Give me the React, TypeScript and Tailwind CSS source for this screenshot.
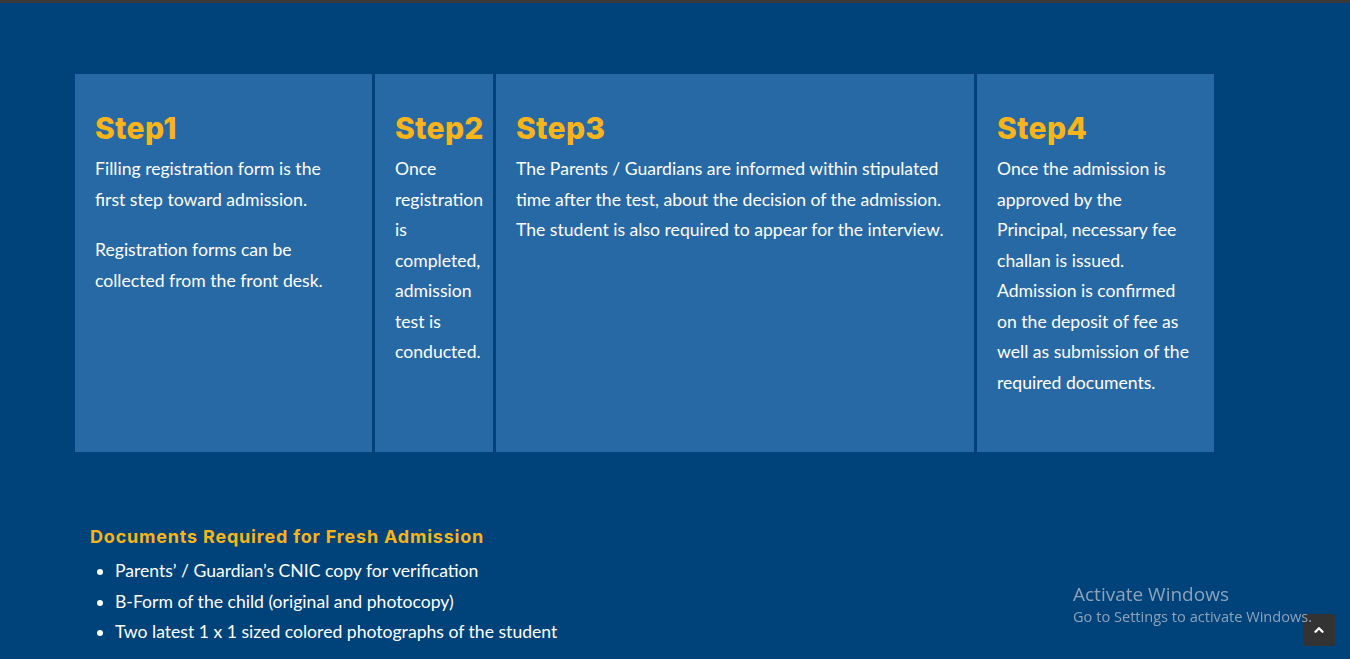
import { ChevronUp } from "lucide-react";

const steps = [
  {
    title: "Step1",
    width: "w-[297px]",
    paras: [
      "Filling registration form is the first step toward admission.",
      "Registration forms can be collected from the front desk.",
    ],
  },
  {
    title: "Step2",
    width: "w-[118px]",
    paras: ["Once registration is completed, admission test is conducted."],
  },
  {
    title: "Step3",
    width: "w-[478px]",
    paras: [
      "The Parents / Guardians are informed within stipulated time after the test, about the decision of the admission. The student is also required to appear for the interview.",
    ],
  },
  {
    title: "Step4",
    width: "w-[237px]",
    paras: [
      "Once the admission is approved by the Principal, necessary fee challan is issued. Admission is confirmed on the deposit of fee as well as submission of the required documents.",
    ],
  },
];

const documents = [
  "Parents’ / Guardian’s CNIC copy for verification",
  "B-Form of the child (original and photocopy)",
  "Two latest 1 x 1 sized colored photographs of the student",
];

export default function App() {
  return (
    <div className="min-h-screen bg-[#00437a] font-['Lato',sans-serif] text-white">
      {/* top strip */}
      <div className="h-[3px] bg-[#3a3a3a]" />

      {/* Steps */}
      <div className="pt-[71px] pl-[75px]">
        <div className="flex h-[378px] w-[1139px] gap-[3px]">
          {steps.map((s) => (
            <div
              key={s.title}
              className={`${s.width} shrink-0 bg-[#2769a5] px-5 pt-[36px]`}
            >
              <h2 className="font-['Inter',sans-serif] text-[30px] font-extrabold leading-[36px] tracking-[0.3px] text-[#f9b41a]">
                {s.title}
              </h2>
              <div className="mt-2">
                {s.paras.map((p, i) => (
                  <p key={i} className="mb-5 text-[17.6px] leading-[30.5px]">
                    {p}
                  </p>
                ))}
              </div>
            </div>
          ))}
        </div>
      </div>

      {/* Documents */}
      <div className="pl-[90px] pt-[73px]">
        <h3 className="font-['Inter',sans-serif] text-[18px] font-bold leading-[24px] tracking-[0.8px] text-[#f9b41a]">
          Documents Required for Fresh Admission
        </h3>
        <ul className="mt-[7px] list-disc pl-[25px] text-[17.6px] leading-[30.5px]">
          {documents.map((d) => (
            <li key={d}>{d}</li>
          ))}
        </ul>
      </div>

      {/* scroll to top */}
      <button className="fixed left-[1303px] top-[614px] z-10 flex h-8 w-8 items-center justify-center rounded-[2px] bg-[#333333]">
        <ChevronUp size={14} strokeWidth={4} color="#ffffff" />
      </button>

      {/* Windows watermark */}
      <div className="pointer-events-none fixed left-[1073px] top-[581px] z-20 font-['Open_Sans',sans-serif] text-[#8ea2b9]">
        <div className="text-[19px] leading-[26px]">Activate Windows</div>
        <div className="text-[14.6px] leading-[18px]">
          Go to Settings to activate Windows.
        </div>
      </div>
    </div>
  );
}
